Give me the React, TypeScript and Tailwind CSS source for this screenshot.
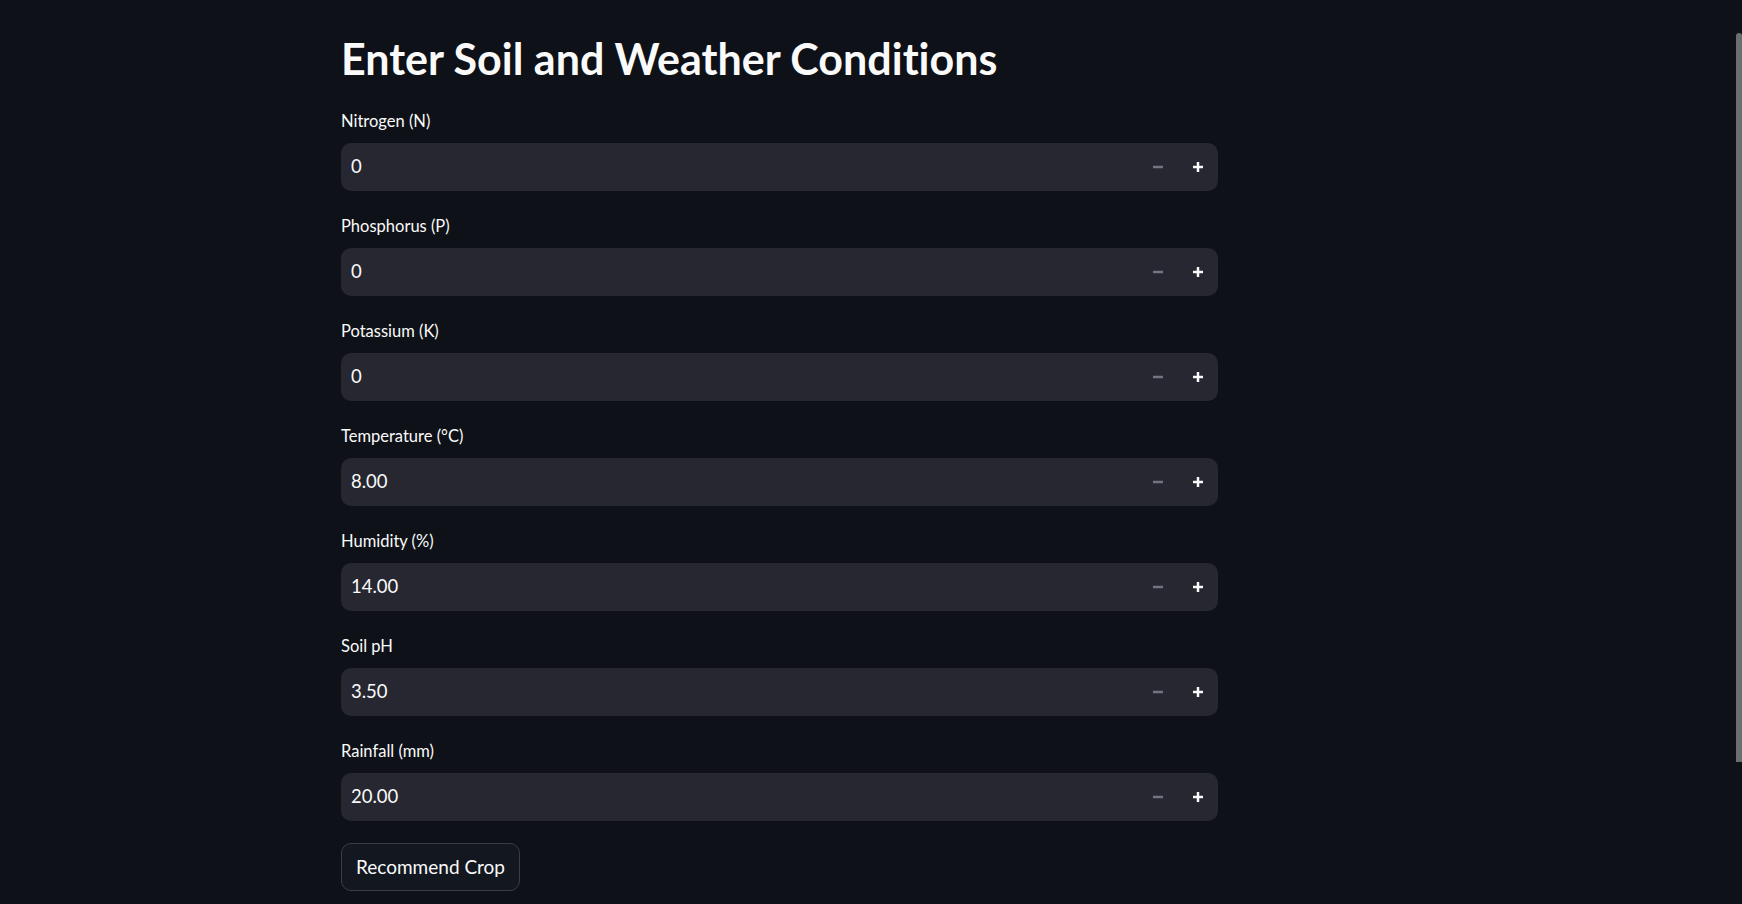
import React from 'react';

interface Field {
    label: string;
    value: string;
}

const fields: Field[] = [
    { label: 'Nitrogen (N)', value: '0' },
    { label: 'Phosphorus (P)', value: '0' },
    { label: 'Potassium (K)', value: '0' },
    { label: 'Temperature (°C)', value: '8.00' },
    { label: 'Humidity (%)', value: '14.00' },
    { label: 'Soil pH', value: '3.50' },
    { label: 'Rainfall (mm)', value: '20.00' },
];

const NumberInput: React.FC<Field> = ({ label, value }) => {
    return (
        <div className="flex flex-col">
            <label className="h-[30px] leading-[30px] text-[16.5px] text-[#fafafa]">{label}</label>
            <div className="mt-[7px] h-[48px] w-[877px] rounded-[10px] bg-[#262730] flex items-center">
                <input
                    readOnly
                    value={value}
                    className="flex-1 bg-transparent pl-[10px] text-[18.5px] text-[#fafafa] outline-none"
                />
                <button className="w-[40px] h-full flex items-center justify-center">
                    <svg width="12" height="12" viewBox="0 0 12 12">
                        <line x1="1" y1="6" x2="11" y2="6" stroke="#72757f" strokeWidth="2.5" />
                    </svg>
                </button>
                <button className="w-[40px] h-full flex items-center justify-center">
                    <svg width="12" height="12" viewBox="0 0 12 12">
                        <line x1="1" y1="6" x2="11" y2="6" stroke="#fafafa" strokeWidth="2.5" />
                        <line x1="6" y1="1" x2="6" y2="11" stroke="#fafafa" strokeWidth="2.5" />
                    </svg>
                </button>
            </div>
        </div>
    );
};

export default function App() {
    return (
        <div
            className="relative min-h-screen h-[904px] overflow-hidden bg-[#0e1117] [font-variant-ligatures:none]"
            style={{ fontFamily: 'Lato, "Noto Sans", sans-serif' }}
        >
            <div className="pl-[341px] pt-[32px]">
                <h1 className="h-[54px] leading-[54px] text-[43px] font-bold text-[#fafafa]">
                    Enter Soil and Weather Conditions
                </h1>
                <div className="mt-[20px] flex flex-col gap-[20px]">
                    {fields.map((f) => (
                        <NumberInput key={f.label} label={f.label} value={f.value} />
                    ))}
                </div>
                <button className="mt-[22px] w-[179px] h-[48px] rounded-[10px] border border-[#3b3d44] bg-[#131720] text-[19px] text-[#fafafa]">
                    Recommend Crop
                </button>
            </div>
            <div className="absolute right-0 top-[33px] w-[6px] h-[729px] rounded-t-[3px] bg-[#6c6d71]" />
        </div>
    );
}
